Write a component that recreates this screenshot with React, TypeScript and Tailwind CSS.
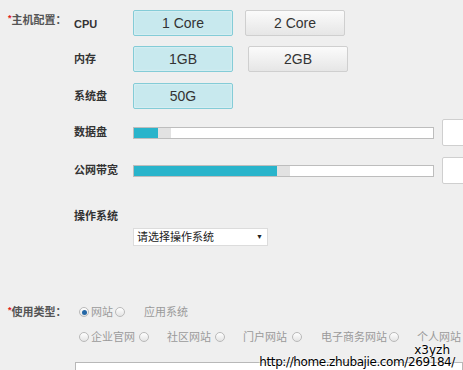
import React from "react";

const font = "font-['Liberation_Sans','Noto_Sans_CJK_SC',sans-serif]";

function OptionButton({ label, active, className = "" }: { label: string; active?: boolean; className?: string }) {
  return (
    <div
      className={
        "w-[100px] h-[26px] shrink-0 flex items-center justify-center text-[14px] text-[#333] rounded-[2px] border " +
        (active
          ? "bg-[#c8e9ee] border-[#84ccd7] shadow-[inset_0_0_2px_rgba(255,255,255,0.8)]"
          : "bg-gradient-to-b from-[#fbfbfb] to-[#e6e6e6] border-[#cfcfcf]") +
        " " +
        className
      }
    >
      {label}
    </div>
  );
}

function Slider({ fill }: { fill: number }) {
  return (
    <div className="flex items-center shrink-0">
      <div className="w-[301px] h-[12px] bg-white border border-[#bdbdbd] flex">
        <div className="h-full bg-[#29b4cb]" style={{ width: fill }} />
        <div className="w-[13px] h-full bg-[#e2e2e2]" />
      </div>
      <div className="ml-[8px] w-[40px] h-[27px] bg-white border border-[#cfcfcf] rounded-[2px]" />
    </div>
  );
}

function Radio({ checked }: { checked?: boolean }) {
  return (
    <span className="w-[10px] h-[10px] rounded-full border border-[#b9b9b9] bg-gradient-to-b from-white to-[#e4e4e4] flex items-center justify-center shrink-0">
      {checked && <span className="w-[5px] h-[5px] rounded-full bg-[#2467a6]" />}
    </span>
  );
}

function SubLabel({ children }: { children: React.ReactNode }) {
  return <div className="w-[59px] shrink-0 text-[11px] font-bold text-[#333] whitespace-nowrap">{children}</div>;
}

function Item({ children, ml }: { children: React.ReactNode; ml: string }) {
  return <span className={"whitespace-nowrap shrink-0 " + ml}>{children}</span>;
}

export default function App() {
  return (
    <div className={"relative w-[463px] h-[370px] overflow-hidden bg-[#efefef] " + font}>
      {/* 主机配置 */}
      <div className="flex">
        <div className="w-[74px] shrink-0 pl-[8px] pt-[12px] text-[11px] font-bold text-[#555] whitespace-nowrap">
          <span className="text-[#e02020] text-[9px] align-top">*</span>主机配置：
        </div>
        <div className="flex flex-col pt-[10px]">
          <div className="flex items-center h-[26px]">
            <SubLabel>
              <span className="relative top-[1px]">CPU</span>
            </SubLabel>
            <OptionButton label="1 Core" active />
            <OptionButton label="2 Core" className="ml-[12px]" />
          </div>
          <div className="flex items-center h-[26px] mt-[10px]">
            <SubLabel>内存</SubLabel>
            <OptionButton label="1GB" active />
            <OptionButton label="2GB" className="ml-[15px]" />
          </div>
          <div className="flex items-center h-[26px] mt-[11px]">
            <SubLabel>系统盘</SubLabel>
            <OptionButton label="50G" active />
          </div>
          <div className="flex items-center h-[27px] mt-[10px]">
            <SubLabel>数据盘</SubLabel>
            <Slider fill={24} />
          </div>
          <div className="flex items-center h-[27px] mt-[11px]">
            <SubLabel>公网带宽</SubLabel>
            <Slider fill={143} />
          </div>
          <div className="flex items-center h-[12px] mt-[26px]">
            <SubLabel>操作系统</SubLabel>
          </div>
          <div className="flex mt-[6px]">
            <div className="w-[59px] shrink-0" />
            <div className="w-[135px] h-[18px] bg-white border border-[#dcdcdc] flex items-center justify-between pl-[3px] pr-[4px] text-[11px] text-[#222]">
              <span>请选择操作系统</span>
              <span className="text-[7px] text-[#222]">▼</span>
            </div>
          </div>
        </div>
      </div>

      {/* 使用类型 */}
      <div className="flex mt-[60px]">
        <div className="w-[74px] shrink-0 pl-[8px] text-[11px] font-bold text-[#555] whitespace-nowrap h-[12px] flex items-center">
          <span className="text-[#e02020] text-[9px] self-start leading-none">*</span>使用类型：
        </div>
        <div className="flex flex-col pl-[5px] text-[11px] text-[#9a9a9a]">
          <div className="flex items-center h-[12px]">
            <Radio checked />
            <Item ml="ml-[2px]">网站</Item>
            <Item ml="ml-[2px]">
              <Radio />
            </Item>
            <Item ml="ml-[19px]">应用系统</Item>
          </div>
          <div className="flex items-center h-[12px] mt-[13px]">
            <Radio />
            <Item ml="ml-[2px]">企业官网</Item>
            <Item ml="ml-[4px]">
              <Radio />
            </Item>
            <Item ml="ml-[18px]">社区网站</Item>
            <Item ml="ml-[4px]">
              <Radio />
            </Item>
            <Item ml="ml-[18px]">门户网站</Item>
            <Item ml="ml-[5px]">
              <Radio />
            </Item>
            <Item ml="ml-[19px]">电子商务网站</Item>
            <Item ml="ml-[2px]">
              <Radio />
            </Item>
            <Item ml="ml-[18px]">个人网站</Item>
          </div>
        </div>
      </div>

      <div className="ml-[75px] mt-[19px] h-[40px] border border-[#b8b8b8] bg-white" />

      {/* watermark */}
      <div className="absolute right-[8px] bottom-[2px] flex flex-col items-end text-[12px] leading-[12px] text-black font-['DejaVu_Sans',sans-serif] [text-shadow:0_0_2px_#fff,0_0_2px_#fff]">
        <span className="mr-[5px]">x3yzh</span>
        <span className="tracking-[-0.4px]">http://home.zhubajie.com/269184/</span>
      </div>
    </div>
  );
}
